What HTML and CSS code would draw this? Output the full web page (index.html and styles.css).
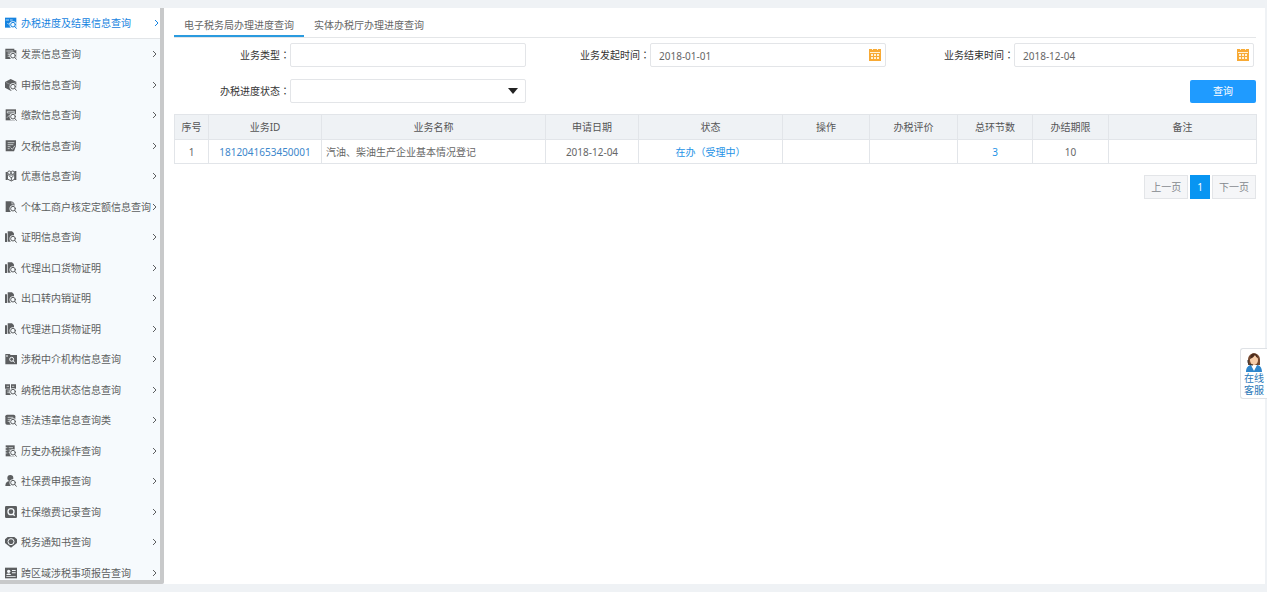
FILE: index.html
```html
<!DOCTYPE html>
<html lang="zh-CN">
<head>
<meta charset="utf-8">
<meta name="viewport" content="width=device-width, initial-scale=1">
<title>办税进度及结果信息查询</title>
<link rel="stylesheet" href="styles.css">
</head>
<body>
<svg class="sprite" aria-hidden="true">
  <symbol id="lens" viewBox="0 0 36 36"><g fill="none" stroke-linecap="round"><circle cx="24" cy="23" r="7" class="halo"/><path d="M29 28l5 6" class="halo"/><circle cx="24" cy="23" r="7" class="ring"/><path d="M29 28l5 6" class="ring"/></g></symbol>
  <symbol id="chevron" viewBox="0 0 5 8"><path d="M1 1l3 3-3 3" fill="none" stroke="currentColor"/></symbol>
  <symbol id="copies" viewBox="0 0 36 36"><path d="M8 1h13l6 6v25H8z"/><path d="M0 7h6v26H0z"/><use href="#lens"/></symbol>
  <symbol id="calendar" viewBox="0 0 12 12"><path d="M0 0h12v12H0z"/><path d="M1 3h10v1H1zM2 5h2v2H2zM5 5h2v2H5zM8 5h2v2H8zM2 8h2v2H2zM5 8h2v2H5zM8 8h2v2H8zM3 0h1v1H3zM8 0h1v1H8z" fill="#fff2d8"/></symbol>
</svg>
<div class="page">
  <nav class="sidebar">
    <a class="item active" href="#"><svg class="icon" viewBox="0 0 36 36"><path d="M0 2h34v30H0z"/><path d="M2 9h10M15 9h8M7 18l4 4 7-8" fill="none" stroke="#fff" stroke-width="2"/><use href="#lens"/></svg><span>办税进度及结果信息查询</span><svg class="chevron"><use href="#chevron"/></svg></a>
    <a class="item" href="#"><svg class="icon" viewBox="0 0 36 36"><path d="M1 2h27v5h6v26H1z"/><path d="M4 9h21M8 15h14M8 20h8M8 25h8" fill="none" stroke="#f6fafd" stroke-width="2"/><use href="#lens"/></svg><span>发票信息查询</span><svg class="chevron"><use href="#chevron"/></svg></a>
    <a class="item" href="#"><svg class="icon" viewBox="0 0 36 36"><path d="M17 0l17 8v18l-17 9-17-9V9z"/><path d="M2 10l15 7 15-7" fill="none" stroke="#a9acae" stroke-width="2"/><use href="#lens"/></svg><span>申报信息查询</span><svg class="chevron"><use href="#chevron"/></svg></a>
    <a class="item" href="#"><svg class="icon" viewBox="0 0 36 36"><path d="M2 1h31v33H2z"/><path d="M7 7h21v5H7zM6 26l9-9 5 2" fill="none" stroke="#f6fafd" stroke-width="2"/><use href="#lens"/></svg><span>缴款信息查询</span><svg class="chevron"><use href="#chevron"/></svg></a>
    <a class="item" href="#"><svg class="icon" viewBox="0 0 36 36"><path d="M2 1h31v17l-6 16H2z"/><path d="M8 8h20M8 14h17M8 20h8M8 26h6M17 23l5 5 8-11" fill="none" stroke="#f6fafd" stroke-width="2"/></svg><span>欠税信息查询</span><svg class="chevron"><use href="#chevron"/></svg></a>
    <a class="item" href="#"><svg class="icon" viewBox="0 0 36 36"><path d="M2 6h6v24H2zM28 3h6v27h-6z"/><g fill="none" stroke="currentColor" stroke-width="3"><circle cx="13" cy="8" r="5"/><circle cx="23" cy="8" r="5"/><path d="M7 15h23v12l-11 6-12-6zM13 18l6 6 6-6M19 22v10"/></g></svg><span>优惠信息查询</span><svg class="chevron"><use href="#chevron"/></svg></a>
    <a class="item" href="#"><svg class="icon" viewBox="0 0 36 36"><path d="M2 1h18v9h9v23H2z"/><path d="M22 1l7 7h-7z"/><use href="#lens"/></svg><span>个体工商户核定定额信息查询</span><svg class="chevron"><use href="#chevron"/></svg></a>
    <a class="item" href="#"><svg class="icon"><use href="#copies"/></svg><span>证明信息查询</span><svg class="chevron"><use href="#chevron"/></svg></a>
    <a class="item" href="#"><svg class="icon"><use href="#copies"/></svg><span>代理出口货物证明</span><svg class="chevron"><use href="#chevron"/></svg></a>
    <a class="item" href="#"><svg class="icon"><use href="#copies"/></svg><span>出口转内销证明</span><svg class="chevron"><use href="#chevron"/></svg></a>
    <a class="item" href="#"><svg class="icon"><use href="#copies"/></svg><span>代理进口货物证明</span><svg class="chevron"><use href="#chevron"/></svg></a>
    <a class="item" href="#"><svg class="icon" viewBox="0 0 36 36"><path d="M1 3h13l3 3h19v28H1z"/><g fill="none" stroke="#f6fafd" stroke-width="3"><path d="M3 9h6"/><circle cx="20" cy="19" r="6"/><path d="M24 23l5 6"/></g></svg><span>涉税中介机构信息查询</span><svg class="chevron"><use href="#chevron"/></svg></a>
    <a class="item" href="#"><svg class="icon" viewBox="0 0 36 36"><path d="M0 1h15v13H0zM18 1h15v13H18zM2 16h29v17H2z"/><path d="M5 7h7M21 7h7M7 21h9M7 26h9" stroke="#f6fafd" stroke-width="2"/><use href="#lens"/></svg><span>纳税信用状态信息查询</span><svg class="chevron"><use href="#chevron"/></svg></a>
    <a class="item" href="#"><svg class="icon" viewBox="0 0 36 36"><rect x="1" y="2" width="30" height="30" rx="5"/><path d="M8 10h17M8 16h11M8 22h8" stroke="#f6fafd" stroke-width="2"/><use href="#lens"/></svg><span>违法违章信息查询类</span><svg class="chevron"><use href="#chevron"/></svg></a>
    <a class="item" href="#"><svg class="icon" viewBox="0 0 36 36"><path d="M2 1h27v33H2z"/><path d="M0 8h7M0 16h7M0 24h7M11 8h13M11 15h13M11 22h8" stroke="#f6fafd" stroke-width="2"/><use href="#lens"/></svg><span>历史办税操作查询</span><svg class="chevron"><use href="#chevron"/></svg></a>
    <a class="item" href="#"><svg class="icon" viewBox="0 0 36 36"><circle cx="16" cy="9" r="9"/><path d="M1 33c0-10 5-15 15-15s14 5 14 15z"/><use href="#lens"/></svg><span>社保费申报查询</span><svg class="chevron"><use href="#chevron"/></svg></a>
    <a class="item" href="#"><svg class="icon" viewBox="0 0 36 36"><rect width="36" height="36" rx="4"/><g fill="none" stroke="#f6fafd" stroke-width="4"><circle cx="18" cy="17" r="9"/><path d="M24 24l5 5"/></g></svg><span>社保缴费记录查询</span><svg class="chevron"><use href="#chevron"/></svg></a>
    <a class="item" href="#"><svg class="icon" viewBox="0 0 36 36"><path d="M8 3h20l8 7v11L18 35 0 21V10z"/><g fill="none" stroke="#f6fafd" stroke-width="3"><circle cx="18" cy="17" r="9"/></g></svg><span>税务通知书查询</span><svg class="chevron"><use href="#chevron"/></svg></a>
    <a class="item" href="#"><svg class="icon" viewBox="0 0 36 36"><path d="M0 2h36v32H0z"/><path d="M4 24c0-6 14-6 14 0zM21 9h11v3H21zM21 16h11v3H21zM4 28h28v2H4z" fill="#f6fafd"/><circle cx="11" cy="13" r="5" fill="#f6fafd"/></svg><span>跨区域涉税事项报告查询</span><svg class="chevron"><use href="#chevron"/></svg></a>
  </nav>
  <main class="main">
    <div class="tabs" role="tablist">
      <button class="tab selected" type="button" role="tab" aria-selected="true">电子税务局办理进度查询</button>
      <button class="tab" type="button" role="tab" aria-selected="false">实体办税厅办理进度查询</button>
    </div>
    <form class="filters">
      <label for="type">业务类型<span lang="zh-TW">：</span></label>
      <div class="field"><input id="type" type="text"></div>
      <label for="start">业务发起时间<span lang="zh-TW">：</span></label>
      <div class="field"><input id="start" type="text" value="2018-01-01"><svg class="calendar"><use href="#calendar"/></svg></div>
      <label for="end">业务结束时间<span lang="zh-TW">：</span></label>
      <div class="field"><input id="end" type="text" value="2018-12-04"><svg class="calendar"><use href="#calendar"/></svg></div>
      <label class="second" for="status">办税进度状态<span lang="zh-TW">：</span></label>
      <div class="field"><select id="status"><option></option></select><svg class="arrow" viewBox="0 0 10 6"><path d="M0 0h10L5 6z"/></svg></div>
      <button class="search" type="button">查询</button>
    </form>
    <table class="results">
      <colgroup><col class="c-no"><col class="c-id"><col class="c-name"><col class="c-date"><col class="c-state"><col class="c-op"><col class="c-rate"><col class="c-steps"><col class="c-limit"><col class="c-note"></colgroup>
      <thead><tr><th>序号</th><th>业务ID</th><th>业务名称</th><th>申请日期</th><th>状态</th><th>操作</th><th>办税评价</th><th>总环节数</th><th>办结期限</th><th>备注</th></tr></thead>
      <tbody><tr><td>1</td><td><a class="id" href="#">1812041653450001</a></td><td class="name">汽油、柴油生产企业基本情况登记</td><td>2018-12-04</td><td><a href="#">在办（受理中）</a></td><td></td><td></td><td><a href="#">3</a></td><td>10</td><td></td></tr></tbody>
    </table>
    <div class="pager">
      <button type="button">上一页</button>
      <button class="current" type="button">1</button>
      <button type="button">下一页</button>
    </div>
  </main>
</div>
<a class="service" href="#">
  <svg viewBox="0 0 18 20"><path d="M3 8C3-1 15-1 15 8v5H3z" fill="#76492f"/><ellipse cx="9" cy="8" rx="4" ry="5" fill="#f7cda8"/><path d="M5 7c2-1 4-2 5-4 1 2 2 3 3 3-1-6-8-6-8 1z" fill="#4c2c1c"/><path d="M1 20c0-5 3-7 5-7l3 4 3-4c3 0 5 3 5 7z" fill="#2e86cc"/><path d="M6 13l3 6 3-6-3 1z" fill="#fff"/><path d="M3 8v2c0 2 2 3 5 3" fill="none" stroke="#333"/></svg>
  <span>在线</span><span>客服</span>
</a>
</body>
</html>
```
FILE: styles.css
```css
* {
  box-sizing: border-box;
}

body {
  margin: 0;
  background: #eff2f5;
  color: #666;
  font: 10px/14px "Noto Sans", "Noto Sans CJK SC", sans-serif;
}

a {
  color: #2492e6;
  text-decoration: none;
}

button,
input,
select {
  margin: 0;
  font: inherit;
  color: inherit;
}

.sprite {
  position: absolute;
  width: 0;
  height: 0;
}

.page {
  display: flex;
  height: 100vh;
  padding: 8px 2px 8px 0;
}

/* Sidebar */
.sidebar {
  display: grid;
  flex: none;
  grid-template-columns: 100%;
  grid-auto-rows: 31px 30px;
  width: 164px;
  overflow: hidden;
  background: #f6fafd;
  border-right: 4px solid #c8c9ca;
  border-bottom: 4px solid #c8c9ca;
  border-bottom-right-radius: 3px;
}

.item {
  display: flex;
  align-items: center;
  padding: 0 3px 0 5px;
  color: #5c5e60;
  white-space: nowrap;
}

.item.active {
  padding-right: 1px;
  background: #fff;
  border-bottom: 1px solid #e2e5e8;
  color: #1583e0;
}

.icon {
  flex: none;
  width: 12px;
  height: 12px;
  margin-right: 4px;
  fill: currentColor;
}

.halo {
  stroke: #f6fafd;
  stroke-width: 7px;
}

.ring {
  fill: #f6fafd;
  stroke: currentColor;
  stroke-width: 3px;
}

.chevron {
  flex: none;
  width: 5px;
  height: 8px;
  margin-left: auto;
}

/* Main panel */
.main {
  flex: 1;
  min-width: 0;
  padding: 0 9px 0 10px;
  background: #fff;
}

.tabs {
  display: flex;
  height: 30px;
  border-bottom: 1px solid #e4e6e8;
}

.tab {
  padding: 6px 10px 0;
  background: none;
  border: 0;
  border-bottom: 2px solid transparent;
}

.tab.selected {
  border-bottom-color: #2a9bdf;
}

/* Filters */
.filters {
  display: grid;
  grid-template-columns: 116px 236fr 124px 236fr 128px 240fr 2px;
  grid-auto-rows: 24px;
  row-gap: 12px;
  align-items: center;
  padding: 5px 0 11px;
}

.filters label {
  color: #333;
  text-align: right;
}

.filters label span {
  font-family: "Noto Sans CJK TC", sans-serif;
}

.second {
  grid-column: 1;
}

.field {
  position: relative;
  height: 24px;
}

.field input,
.field select {
  width: 100%;
  height: 100%;
  padding: 2px 8px 0;
  appearance: none;
  background: #fff;
  border: 1px solid #e3e5e8;
  border-radius: 2px;
  color: #666;
}

.calendar {
  position: absolute;
  top: 6px;
  right: 5px;
  width: 12px;
  height: 12px;
  fill: #f8aa35;
}

.arrow {
  position: absolute;
  top: 9px;
  right: 8px;
  width: 10px;
  height: 6px;
  fill: #222;
  pointer-events: none;
}

.search {
  grid-column: 6 / -1;
  justify-self: end;
  width: 66px;
  height: 23px;
  background: #1f9bff;
  border: 0;
  border-radius: 2px;
  color: #fff;
}

/* Results */
.results {
  width: 100%;
  table-layout: fixed;
  border-collapse: collapse;
  text-align: center;
}

.results th,
.results td {
  height: 24px;
  padding: 0;
  border: 1px solid #e2e5e9;
}

.results th {
  height: 25px;
  background: #eff2f5;
  color: #555;
  font-weight: 400;
}

.results .name {
  padding-left: 4px;
  text-align: left;
}

.results .id {
  color: #3d87cb;
}

.c-no { width: 34px; }
.c-id { width: 113px; }
.c-name { width: 224px; }
.c-date { width: 93px; }
.c-state { width: 144px; }
.c-op { width: 87px; }
.c-rate { width: 88px; }
.c-steps { width: 75px; }
.c-limit { width: 76px; }
.c-note { width: 148px; }

/* Pager */
.pager {
  display: flex;
  justify-content: flex-end;
  gap: 2px;
  padding-top: 11px;
}

.pager button {
  height: 24px;
  padding: 0 6px;
  background: #f5f6f8;
  border: 1px solid #e3e5e8;
  color: #84888d;
}

.pager .current {
  background: #0895f2;
  border-color: #0895f2;
  color: #fff;
}

/* Floating service link */
.service {
  position: fixed;
  top: 348px;
  right: 0;
  display: flex;
  flex-direction: column;
  align-items: center;
  width: 27px;
  padding: 3px 0 2px;
  background: #fff;
  border: 1px solid #dfe2e6;
  border-right: 0;
  border-radius: 3px 0 0 3px;
  color: #2877b8;
  line-height: 12px;
}

.service svg {
  width: 18px;
  height: 20px;
}
```
